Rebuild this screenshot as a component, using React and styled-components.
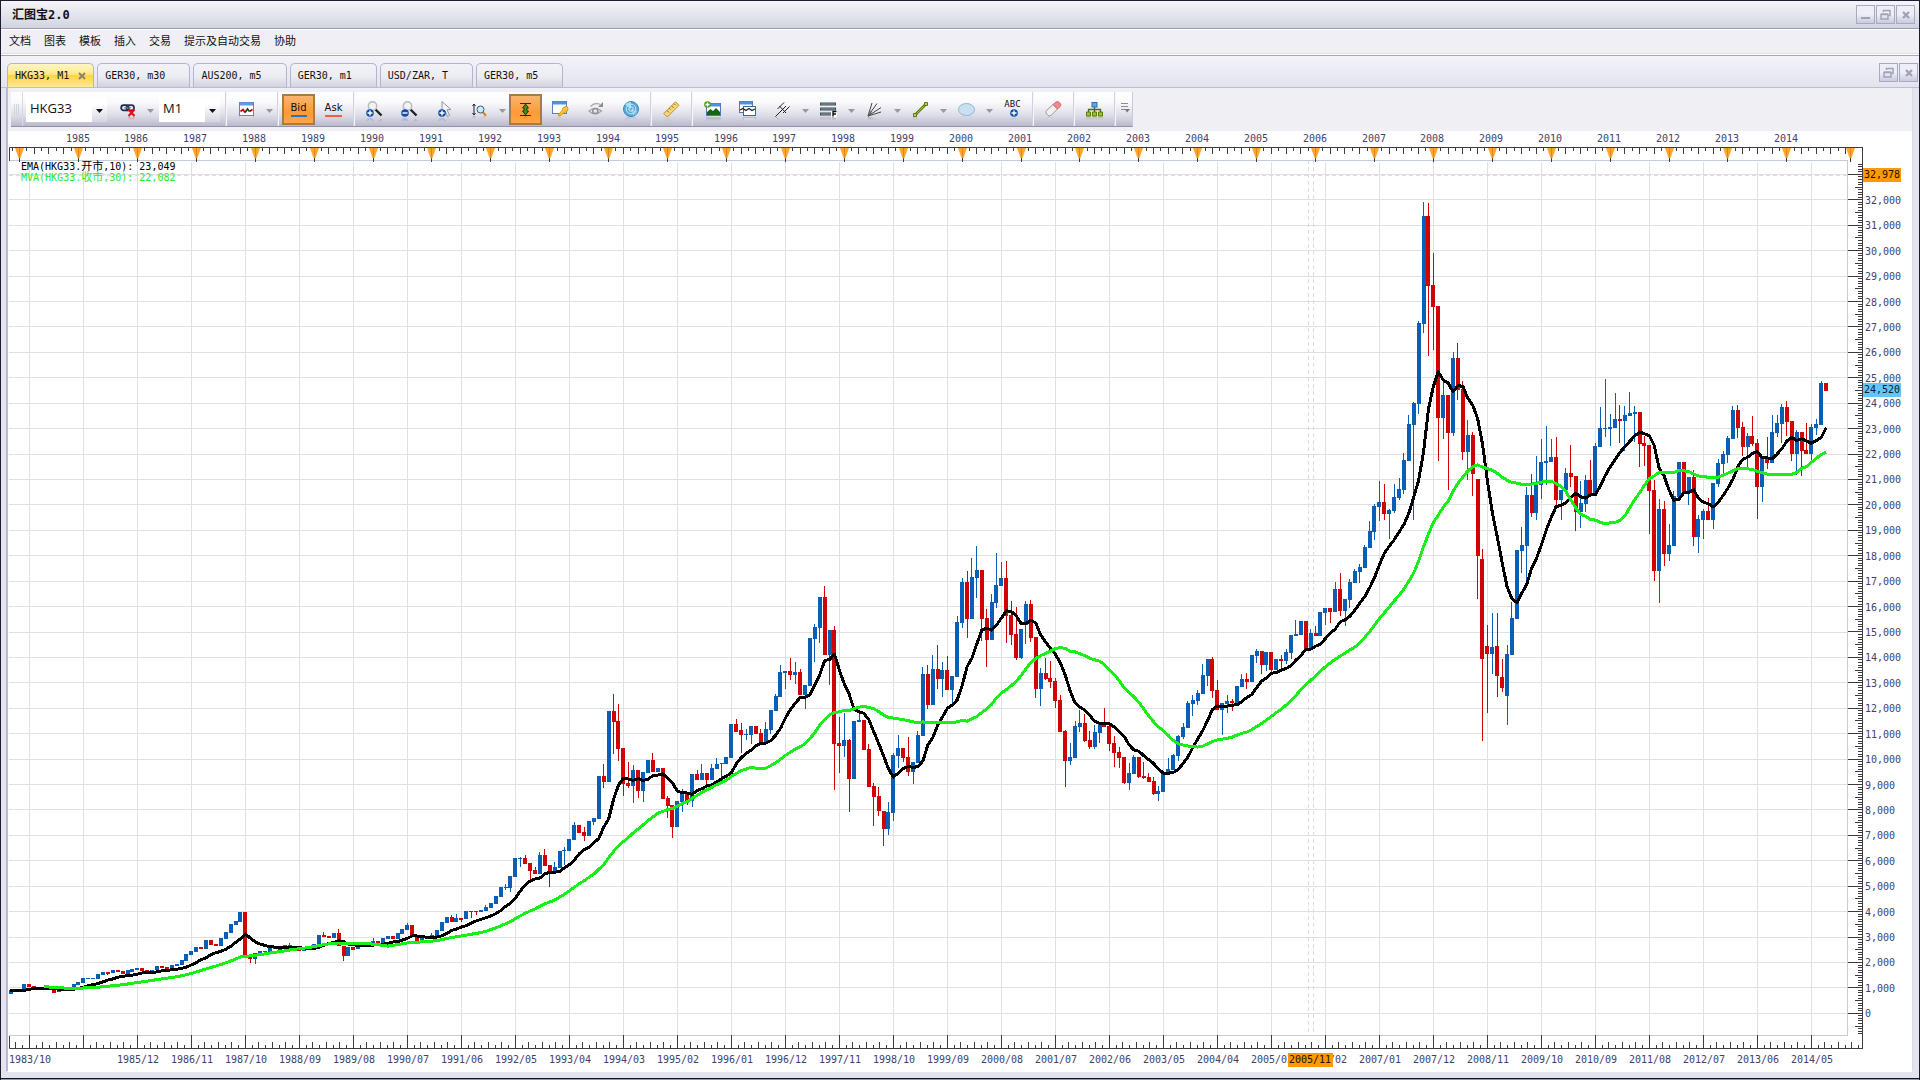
import React from "react";
import styled, { createGlobalStyle, css } from "styled-components";

const MONO = `"DejaVu Sans Mono", "Noto Sans CJK SC", monospace`;
const SANS = `"Open Sans", "Noto Sans CJK SC", sans-serif`;

const GlobalStyle = createGlobalStyle`
  *, *::before, *::after { box-sizing: border-box; }
  body { margin: 0; background: #e4e4ef; }
  button, select { font: inherit; color: inherit; }
`;

const Window = styled.div`
  display: flex;
  flex-direction: column;
  min-height: 100vh;
  border: 1px solid #1e1c2e;
  border-bottom: 0;
  background: #e4e4ef;
  font-family: ${MONO};
  font-size: 10px;
  color: #111;
`;

const TitleBar = styled.header`
  display: flex;
  align-items: center;
  justify-content: space-between;
  height: 28px;
  padding: 0 4px 0 11px;
  background: linear-gradient(#f5f5f9, #e4e5ed 50%, #d0d3e0);
  border-bottom: 1px solid #9c9cb2;
`;

const Title = styled.h1`
  margin: 0;
  font-size: 12px;
  line-height: 16px;
  font-weight: bold;
`;

const WindowButtons = styled.div`
  display: flex;
  gap: 1px;
`;

const WindowButton = styled.button`
  display: grid;
  place-items: center;
  width: 19px;
  height: 19px;
  padding: 0;
  border: 1px solid #a9a9c2;
  background: linear-gradient(#eeeef6 50%, #c9cade);
  color: #a0a2ba;
`;

const MenuBar = styled.nav`
  display: flex;
  align-items: center;
  gap: 13px;
  height: 27px;
  padding: 0 9px 2px 8px;
  border-top: 1px solid #fff;
  border-bottom: 1px solid #a4a4c2;
  background: linear-gradient(#f0eff5 23px, #dfdfe8 23px, #dfdfe8 24px, #fff 24px);
`;

const MenuItem = styled.button`
  padding: 0;
  border: 0;
  background: none;
  font-size: 11px;
  line-height: 16px;
`;

const TabBar = styled.div`
  display: flex;
  justify-content: space-between;
  align-items: flex-start;
  height: 32px;
  padding: 7px 1px 0 6px;
  background: linear-gradient(#f3f3f9, #e3e3ef);
  border-bottom: 1px solid #bcbcd4;
`;

const TabList = styled.div`
  display: flex;
  gap: 3px;
  height: 24px;
`;

const Tab = styled.button`
  display: flex;
  align-items: center;
  gap: 9px;
  height: 24px;
  padding: 0 24px 0 7px;
  border: 1px solid #b4b4cf;
  border-bottom: 0;
  border-radius: 5px 5px 0 0;
  background: linear-gradient(#f2f2f7, #ececf3 55%, #d2d2e0);
  white-space: nowrap;
  ${(p) =>
    p.$active &&
    css`
      padding-right: 7px;
      background: linear-gradient(#fff6c8, #ffe88a 45%, #ffd541 50%, #ffe993);
    `}
`;

const Workspace = styled.main`
  margin: 0 6px 0 5px;
  border-left: 2px solid #b9b9d6;
  border-right: 1px solid #dadae8;
  border-bottom: 1px solid #fff;
  background: #fff;
`;

const ToolbarRow = styled.div`
  display: flex;
  height: 43px;
  padding: 4px 0 4px 3px;
  background: #f0eff4;
`;

const Toolbar = styled.div`
  display: flex;
  align-items: center;
  height: 35px;
  border-bottom: 1px solid #9292ae;
  border-right: 1px solid #c8c8d8;
  background: linear-gradient(#ffffff, #fafafc 30%, #dcdce7 70%, #b9b9cd);
`;

const Grip = styled.span`
  width: 12px;
  height: 34px;
  background:
    repeating-linear-gradient(90deg, #d4d4de 0 1px, transparent 1px 2px) 3px 12px / 6px 11px no-repeat;
  border-right: 1px solid #d9d9e6;
`;

const Separator = styled.span`
  width: 6px;
  height: 34px;
  background: linear-gradient(90deg, transparent 2px, #d0d0de 2px, #d0d0de 3px, #f6f6fa 3px, #f6f6fa 4px, transparent 4px);
`;

const ToolButton = styled.button`
  display: grid;
  place-items: center;
  width: 33px;
  height: 31px;
  margin: 0 1px;
  padding: 0;
  border: 1px solid transparent;
  background: none;
  ${(p) =>
    p.$on &&
    css`
      border: 2px solid #a87b45;
      background: linear-gradient(#f8b56f, #ff9a38 60%, #ffa64a);
    `}
  svg {
    display: block;
    overflow: visible;
    -webkit-box-reflect: below -1px linear-gradient(transparent 70%, rgba(255, 255, 255, 0.35));
  }
`;

const DropButton = styled.button`
  width: 11px;
  height: 31px;
  padding: 0;
  border: 0;
  background: none;
  color: #9898a4;
`;

const OverflowButton = styled(DropButton)`
  width: 14px;
`;

const Quote = styled.span`
  padding-bottom: 2px;
  border-bottom: 2px solid ${(p) => p.$color};
  font: 10px/11px "DejaVu Sans", sans-serif;
`;

const Combo = styled.label`
  display: grid;
  grid-template-columns: 1fr 15px;
  width: ${(p) => p.$width}px;
  height: 25px;
  margin: 0 3px;
  background: #fff;
  font-family: ${SANS};
  font-size: 13px;
`;

const ComboSelect = styled.select`
  grid-area: 1 / 1 / 2 / 3;
  appearance: none;
  width: 100%;
  padding: 0 18px 3px 4px;
  border: 0;
  background: none;
`;

const ComboArrow = styled.span`
  grid-area: 1 / 2;
  display: grid;
  place-items: center;
  padding-top: 4px;
  background: linear-gradient(#fff 30%, #d5d5e2);
  pointer-events: none;
`;

const ChartSvg = styled.svg`
  display: block;
  width: 100%;
  height: auto;
  background: #fff;
  font-family: ${MONO};
  font-size: 10px;
`;

const Footer = styled.footer`
  height: 8px;
  margin-top: auto;
  border-bottom: 1px solid #8c9bab;
  background: linear-gradient(#e4e4ef 6px, #14141f 6px);
`;

/* ------------------------------------------------------------ chart data */

// Each block stores its monthly bars on a fine grid: y = base + value / scale.
// A bar reads "colour + body top, body bottom, [wick top, [wick bottom]]";
// "b" closes up, "r" closes down.
const BLOCKS = [
  {
    base: 880, scale: 3,
    bars: `b331 342,r331 335,b330 335,b312 330,r312 320,r318 324,b320 325,r320 326,r325 330,r330 338,b331 337,b328 332,
    b322 328,b312 324,b306 315,b294 308,b294 296,b294 297,b282 296,b276 284,r276 282 276 286,b271 280,r271 275,r274 283,b271 282,
    b267 275,b264 270,r264 272,r269 273,b270 275,b258 270,r258 263,r262 270,b255 266,b252 258,b240 255,b222 243,b213 225,
    b202 216,r201 207,b180 207,r180 195,r192 198,b174 198,b156 178,b132 159,b123 136,b96 126,r96 234,r232 237 232 249,
    b220 237 220 252,b213 220,b212 216,b204 216,b205 207,r205 210,b195 208,b195 205 189,r198 212,r205 214,b203 214,b198 206,
    b193 204,b165 192,r165 171 156,r168 173,b159 173,r159 198 147,r198 228 198 243,b201 228,r201 210,b195 208,b190 198,
    r190 196,b183 195 174,r184 190,b174 190,b168 177,r168 177,b159 177,b147 162,b135 150 129,r135 171,r170 183,b174 182,
    b168 176,b165 172 158,b150 168,b126 153,b111 129,r111 126 105,b114 126 102`,
  },
  {
    base: 740, scale: 3,
    bars: `r535 540 535 545,b514 538,r514 516 514 533,r514 517 514 524,b511 517,b501 512 496,b489 503,b469 491,b441 470,b441 443 432 450,
    b408 443 408 455,b354 410,b354 356 350 380,r354 371 345,r369 393 369 416,r390 402 381,b345 402 336,r345 378 327,
    r375 397 375 440,b381 395 366,b333 383,b331 334 321 375,b297 333,b255 300 246,r255 279,r276 288 262 302,b243 288,b234 246 234 255`,
  },
  {
    base: 560, scale: 3,
    bars: `b648 776,r648 665 612 683,b453 665,r453 486 402 582,r483 566 432 603,r564 671 564 708,r669 678 606 683,b630 678 616 728,
    r630 692 630 713,b636 692 636 725,b600 638,r600 636 579,b624 636,r624 717,r714 738 708 773,r735 800 735 833,b723 800,
    b700 725 687 755,r700 722 700 735,b642 722 642 740,r642 660 630,b639 660 612,r639 660 639 672,b624 660 612,b612 627 594,
    b609 612 609 650,b591 612,b492 593,r492 515 477,r510 525 489 578,b522 524 506 540,b498 524 498 553,r498 522,r519 546 506,
    b507 546 486,b450 510 450 522,b408 452 402,b336 410 315,b333 338 333 387,r333 345 294 359,b336 345 306 371,r336 405 327,
    b375 405 375 446,b234 378,b201 237 192 306,b111 204 111 248,r111 285 78,b210 285 210 375,r210 551 198 690,r549 558 471 638,
    b540 558 459 590,r540 656 536 755,b483 656,b480 486 459,r480 570,r567 681 552,r678 711 669 797,r708 753 680 767,
    r753 806 753 857,b756 806 726 825,b585 758 579 782,b564 588 525 623,r564 594 564 605,r591 635 531 647,b606 635 606 671,
    b525 608 512,b342 527 321,r342 434 315 446,b327 434 285,r327 357 255 387,b330 357 306 410,r330 390 288,b348 390 348 432,b186 350 168`,
  },
  {
    base: 520, scale: 3,
    bars: `b186 308 174 323,r186 297 153 354,b171 297 114,b150 173 78 234,r150 297 150 362,r294 359 267 440,b246 359 222,b195 249 99 263,
    b174 197 126,r174 288 123 368,r285 345 243 374,r342 413 261 419,b327 413 327 417,b252 315 243 372,r252 353 240 365,
    r351 507 351 533,b459 507 444 557,r459 476 414 479,r474 486 423 503,r483 543 474 563,r540 636 525,r633 722 630 800,
    b711 722 669 734,b618 713 603,b609 620 570 635,r609 662 582 665,r660 681 633 687,b636 681 615 686,b606 638 606 669,
    r606 620 564,r618 671 618 692,r669 698 648 740,r696 713 681 743,r711 788 711 792,b759 788 729 810,b711 761 705,
    r711 770 711 773,r768 773 726 777,r771 785 760,r783 822 771 825,b813 822 798 842,b759 815,b747 760 714,b705 749 702,
    b648 707 645 722,b621 651 609 656,b549 623 543,b540 551 525 587,b519 542 510 554,b465 521 432,b417 467 417 498,
    r417 513 411 533,r510 570 480,b549 570 549 645,b543 551 525 578,r543 550 537 572,b498 550,b477 500 462,r477 486 459 507,
    b405 486,b393 407 387 429,r393 434 393 461,b396 434 396 453,r396 449 396 455,b417 449,r417 423 405 449,b396 423 387 431,
    b345 398 345 417,b342 347 300,b303 345,r303 386,b339 386 327,r339 347 318,b276 347,b264 278 264 315,r264 276 264 309,
    b207 276 186,r207 272 159 287,b237 272 237 317,b186 240 177 263,b153 188 147,b141 155 132 188,b81 143 75,b33 83 3`,
  },
  {
    base: 190, scale: 2.8,
    bars: `b885 958 879 980,b874 888 815 927,r874 906 823 923,b896 907 893 977,b860 899 823 903,b837 862 806 868,b756 840 736 851,b655 759 630,
    b596 657 594 924,b372 599 367 626,b73 375 34 400,r73 269 36 465,r266 328 176 448,r325 638 325 759,b574 638 535 697,
    r574 680 574 840,b470 680 454 689,r470 560 428 588,r557 734 535 756,b686 734 644 812,r686 795 678 857,r809 1025 809 1145,
    r1033 1313 1005 1543,r1277 1299 1218 1464,b1280 1299 1184 1355,r1277 1361 1184 1420,r1364 1394 1313 1406,
    b1299 1417 1274 1498,b1198 1302 1154,b1008 1201,b994 1011 944 1072,b854 997 832 1100,r854 904 795 916,b823 904 745 924,
    b762 826 697 865,b759 763 661 826,b748 762 697,r748 868 692 890,b840 868 840 924,b792 840 778,r792 803 714 832,
    r801 902 801 955,b876 902 815 946,b812 879 798 902,r812 851 756,b717 851 708,b666 720 608,b666 668 529 692,
    b664 668 627 717,b641 666 568,r641 647 602 708,b630 647 605 731,b624 633 566,b622 626 605 706`,
  },
  {
    base: 340, scale: 3,
    bars: `r216 312 216 381,r309 318 288 377,r315 453 315 582,r450 693 420 722,b507 693 477 789,r507 641 483 678,b615 641 552 662,
    b468 618 453,b366 470,r366 455,b411 455 411 494,r411 591 390 618,b537 591 525 638,b513 540 507 597,r513 540 474,
    b429 540 429 567,b369 432 357 441,b342 372 333 405,b294 345 288 368,b210 297 198,r210 264 195 294,r261 321 246 347,
    b288 321 279 389,r288 312 228 318,r309 441 297 537,b354 441 354 486,r354 369 291 387,b276 369 225,b249 279 225 290,
    b201 252 192 309,r201 246 183 288,r243 342 243 362,b276 342 270 405,r276 332 276 407,r330 342 249,b261 342 252 363,
    b252 264 237 285,b129 255 123,r129 153`,
  },
];

const ORIGIN_X = 29.4;
const GRID_STEP = 54;
const MONTH = GRID_STEP / 11;
const FIRST_BAR = -4;
const ZERO_Y = 1013.3;
const PER_THOUSAND = 25.42;
const LEFT = 9;
const RIGHT = 1847;
const AXIS_RIGHT = 1862;

const candles = BLOCKS.flatMap(({ base, scale, bars }) =>
  bars.split(",").map((raw) => {
    const text = raw.trim();
    const [top, bottom, high, low] = text.slice(1).split(" ").map((v) => base + Number(v) / scale);
    return { up: text[0] === "b", top, bottom, high: high ?? top, low: low ?? bottom };
  })
).map((c, n) => ({ ...c, x: ORIGIN_X + (n + FIRST_BAR) * MONTH }));

// Exponential average of the opening prices, ten months.
function emaPoints() {
  let level = 989.3;
  return candles
    .map((c) => {
      const open = c.up ? c.bottom : c.top;
      level += (open - level) * (2 / 11);
      return `${c.x.toFixed(1)},${level.toFixed(1)}`;
    })
    .join(" ");
}

// Simple average of the closing prices, thirty months.
function mvaPoints() {
  const earlier = Array.from({ length: 22 }, (_, n) => 979 + (n * 14) / 21);
  const closes = [...earlier, ...candles.map((c) => (c.up ? c.top : c.bottom))];
  return candles
    .slice(7)
    .map((c, n) => {
      const span = closes.slice(n, n + 30);
      return `${c.x.toFixed(1)},${(span.reduce((a, b) => a + b, 0) / 30).toFixed(1)}`;
    })
    .join(" ");
}

function monthLabel(k) {
  if (k === 0) return "1983/10";
  const months = 1985 * 12 + 11 + (k - 2) * 11;
  return `${Math.floor(months / 12)}/${String((months % 12) + 1).padStart(2, "0")}`;
}

const range = (n, from = 0) => Array.from({ length: n }, (_, k) => k + from);
const INK = "#42426c";
const AXIS = "#3c3c40";

function Grid() {
  return (
    <g fill="#e0e0e2" shapeRendering="crispEdges">
      {range(34).map((k) => (
        <rect key={k} x={29 + k * GRID_STEP} y="162" width="1" height="873" />
      ))}
      {range(34).map((k) => (
        <rect key={k} x={LEFT} y={Math.round(ZERO_Y - k * PER_THOUSAND - 0.5)} width={RIGHT - LEFT} height="1" />
      ))}
      <path d="M1308.5 160V1036M1313.5 160V1036M9 175.5H1847" stroke="#dcdce0" strokeDasharray="4 3" fill="none" />
      <path d="M9 160.5H1847.5V1035.5H9" stroke="#c6ccd3" fill="none" />
    </g>
  );
}

function TopAxis() {
  const years = range(30).map((k) => ({ year: 1985 + k, x: 78.5 + k * 12 * MONTH }));
  const marks = [19.5, ...years.map((y) => y.x), 1850.5];
  const ticks = range(252).map((k) => ({ x: 19.5 + (k - 1) * MONTH * 1.5, long: (k - 1) % 2 === 0 }));
  return (
    <g>
      <path d="M9.5 161V147.5H1862.5" stroke={AXIS} fill="none" />
      <g fill={AXIS} shapeRendering="crispEdges">
        {ticks
          .filter((t) => t.x < 1846)
          .map((t, n) => (
            <rect key={n} x={Math.floor(t.x)} y="148" width="1" height={t.long ? 6 : 3} />
          ))}
      </g>
      {marks.map((x) => {
        const c = Math.floor(x) + 0.5;
        return (
          <g key={x}>
            <path d={`M${c} 157V162`} stroke={AXIS} />
            <path d={`M${c - 4.5} 148H${c + 4.5}L${c + 1} 158H${c - 1}Z`} fill="#ffa62f" />
            <path d={`M${c} 148V157`} stroke="#d98a1c" />
          </g>
        );
      })}
      {years.map(({ year, x }) => (
        <text key={year} x={Math.round(x) - 1} y="142" textAnchor="middle" fill={INK}>
          {year}
        </text>
      ))}
    </g>
  );
}

function BottomAxis() {
  return (
    <g>
      <path d="M9.5 1036V1048.5H1862.5" stroke={AXIS} fill="none" />
      <g fill={AXIS} shapeRendering="crispEdges">
        {range(275, -2)
          .map((k) => ({ k, x: Math.floor(ORIGIN_X + (k * GRID_STEP) / 8) }))
          .filter((t) => t.x < 1861)
          .map(({ k, x }) => {
            const h = k % 8 === 0 && k < 265 ? 13 : k % 2 === 0 ? 6 : 3;
            return <rect key={k} x={x} y={1048 - h} width="1" height={h} />;
          })}
      </g>
      {range(34)
        .filter((k) => k !== 1)
        .map((k) => (
          <text key={k} x={30 + k * GRID_STEP} y="1063" textAnchor="middle" fill={INK}>
            {monthLabel(k)}
          </text>
        ))}
      <rect x="1288" y="1053" width="45" height="14" fill="#ff9900" />
      <text x="1310" y="1063" textAnchor="middle" fill="#201000">
        2005/11
      </text>
    </g>
  );
}

function PriceAxis() {
  const ticks = range(343, -8).map((k) => ({ k, y: Math.round(ZERO_Y - (k * PER_THOUSAND) / 10 - 0.5) }));
  return (
    <g>
      <path d="M1862.5 147V1049" stroke={AXIS} />
      <g fill={AXIS} shapeRendering="crispEdges">
        {ticks
          .filter((t) => t.y > 161)
          .map(({ k, y }) => {
            const w = k % 10 === 0 ? 14 : k % 5 === 0 ? 7 : 4;
            return <rect key={k} x={AXIS_RIGHT - w} y={y} width={w} height="1" />;
          })}
      </g>
      {range(33).map((k) => (
        <text key={k} x="1865" y={Math.round(ZERO_Y - k * PER_THOUSAND) + 4} fill={INK}>
          {k === 0 ? "0" : `${k},000`}
        </text>
      ))}
      <rect x="1863" y="168" width="38" height="14" fill="#ff9900" />
      <text x="1864" y="178" fill="#201000">
        32,978
      </text>
      <rect x="1863" y="383" width="38" height="14" fill="#63c6f8" />
      <text x="1864" y="393" fill="#101830">
        24,520
      </text>
    </g>
  );
}

function Candles() {
  return (
    <g shapeRendering="crispEdges">
      {candles.map((c, n) => {
        const left = Math.max(Math.round(c.x - 2), LEFT);
        const top = Math.round(c.top);
        const high = Math.round(c.high);
        return (
          <g key={n} fill={c.up ? "#0a5eb6" : "#d00404"}>
            <rect x={Math.round(c.x - 0.5)} y={high} width="1" height={Math.round(c.low) - high} />
            <rect x={left} y={top} width="4" height={Math.max(1, Math.round(c.bottom) - top)} />
          </g>
        );
      })}
    </g>
  );
}

function Chart() {
  return (
    <ChartSvg viewBox="8 131 1904 940" role="img" aria-label="HKG33, M1">
      <Grid />
      <Candles />
      <g fill="none" strokeWidth="3" strokeLinejoin="round" shapeRendering="crispEdges">
        <polyline points={emaPoints()} stroke="#000" />
        <polyline points={mvaPoints()} stroke="#18ee18" />
      </g>
      <text x="21" y="170" fill="#000">
        EMA(HKG33.<tspan fontSize="11">开市</tspan>,10): 23,049
      </text>
      <text x="21" y="181" fill="#2ee62e">
        MVA(HKG33.<tspan fontSize="11">收市</tspan>,30): 22,082
      </text>
      <TopAxis />
      <BottomAxis />
      <PriceAxis />
    </ChartSvg>
  );
}

/* ----------------------------------------------------------------- icons */

const Icon = ({ children, w = 16, h = 16 }) => (
  <svg width={w} height={h} viewBox={`0 0 ${w} ${h}`} fill="none" aria-hidden="true">
    {children}
  </svg>
);

const Badge = ({ minus, x = 4, y = 12 }) => (
  <g>
    <circle cx={x} cy={y} r="3.8" fill="#0b4fae" />
    <path d={`M${x - 2.5} ${y}h5${minus ? "" : `M${x} ${y - 2.5}v5`}`} stroke="#fff" strokeWidth="1.4" />
  </g>
);

const Magnifier = ({ minus }) => (
  <Icon w={17} h={17}>
    <path d="M9.5 8.5L15.5 14.5" stroke="#222" strokeWidth="2.4" />
    <circle cx="6.5" cy="5" r="4.2" fill="#f0f2f4" stroke="#b8babe" strokeWidth="1.4" />
    <Badge minus={minus} />
  </Icon>
);

const icons = {
  link: (
    <Icon w={16} h={15}>
      <rect x="1.2" y="3.2" width="7.5" height="5.2" rx="2.5" stroke="#1c2b45" strokeWidth="1.8" />
      <rect x="6.5" y="3.2" width="7.5" height="5.2" rx="2.5" stroke="#24385c" strokeWidth="1.8" />
      <path d="M4 5.8H11" stroke="#5c7498" />
      <path d="M8.5 7.5L14.5 14M14.5 7.5L8.5 14" stroke="#e01010" strokeWidth="2" />
    </Icon>
  ),
  chart: (
    <Icon w={15} h={14}>
      <rect x=".5" y=".5" width="14" height="13" fill="#fff" stroke="#5c86c4" />
      <path d="M1 2H14" stroke="#5b9be8" strokeWidth="3" />
      <path d="M1.5 9.5L4 7.5L6 10.5" stroke="#c00" strokeWidth="1.7" />
      <path d="M6 10.5L8.5 7L10.5 9.5" stroke="#141" strokeWidth="1.7" />
      <path d="M10.5 9.5L13.5 7.5" stroke="#c00" strokeWidth="1.7" />
    </Icon>
  ),
  zoomIn: <Magnifier />,
  zoomOut: <Magnifier minus />,
  cursor: (
    <Icon w={14} h={17}>
      <path d="M4 .5V12L7 9.5L9.5 15.5L11.5 14.5L9 8.7H13Z" fill="#f4f4f6" stroke="#94949c" />
      <Badge />
    </Icon>
  ),
  axisZoom: (
    <Icon w={15} h={14}>
      <path d="M2 2V13M.5 4L2 2L3.500 4M.5 11L2 13L3.500 11" stroke="#222" />
      <path d="M10.500 10L14 13.500" stroke="#c8860e" strokeWidth="2" />
      <circle cx="8.500" cy="7.500" r="3.500" fill="#c9ecf8" stroke="#3a5f78" />
    </Icon>
  ),
  fit: (
    <Icon w={11} h={13}>
      <path d="M0 .5H11M0 12.500H11" stroke="#3b2a10" />
      <path d="M5.500 1L8.500 5H7V8H8.500L5.500 12L2.500 8H4V5H2.500Z" fill="#3f8f14" stroke="#1c3c08" />
    </Icon>
  ),
  options: (
    <Icon w={17} h={16}>
      <rect x=".5" y=".5" width="14" height="12" fill="#fff" stroke="#5c80bc" />
      <path d="M1 2H14" stroke="#4f92e4" strokeWidth="3" />
      <path d="M6 14.5L10 9.5L11 7L14.5 5L16 7.5L15 10.5L12 11.5L8 15Z" fill="#fcc43c" stroke="#d8940c" />
    </Icon>
  ),
  eye: (
    <Icon w={16} h={16}>
      <path d="M1 10Q7 4.5 13.5 10Q7 15.5 1 10Z" stroke="#a2a2a4" strokeWidth="1.2" />
      <circle cx="7.3" cy="10" r="2.6" stroke="#909092" strokeWidth="1.5" />
      <path d="M2.5 5.5Q7 .8 12 3.5" stroke="#b0b0b2" strokeWidth="1.4" />
      <path d="M15 1V6H10Z" fill="#8c8c8e" />
    </Icon>
  ),
  radar: (
    <Icon w={16} h={16}>
      <circle cx="8" cy="8" r="7.5" fill="#5ba8d8" stroke="#3b86bd" />
      <path d="M8 8L2 3.5A7 7 0 0 1 8 1Z" fill="#a5dcf4" />
      <path d="M8 8L14.5 10A7 7 0 0 1 10 14.7Z" fill="#8acbea" />
      <circle cx="8" cy="8" r="4.8" stroke="#bfe6f6" />
      <circle cx="8" cy="8" r="2.2" stroke="#d5f0fb" />
    </Icon>
  ),
  ruler: (
    <Icon w={17} h={17}>
      <path d="M.8 12.5L12.5 .8L16 4.3L4.3 16Z" fill="#f7d77d" stroke="#b98f2c" />
      <path d="M4 9.5L6 11.5M6.3 7.2L7.8 8.7M8.6 4.9L10.6 6.9M11 2.6L12.5 4.1" stroke="#8a6514" />
    </Icon>
  ),
  picture: (
    <Icon w={17} h={16}>
      <rect x="2.5" y="2.5" width="14" height="12" fill="#fff" stroke="#5078b4" />
      <path d="M3 4H16" stroke="#4f90e0" strokeWidth="3" />
      <path d="M3 14V11L6.5 8L9 10L12 7L16 11V14Z" fill="#146414" />
      <circle cx="3.5" cy="3.5" r="3.3" fill="#49a018" />
      <path d="M1.5 3.5H5.5M3.5 1.5V5.5" stroke="#fff" strokeWidth="1.3" />
    </Icon>
  ),
  windows: (
    <Icon w={17} h={16}>
      <rect x=".5" y=".5" width="13" height="11" fill="#fff" stroke="#5078b4" />
      <path d="M1 2H13" stroke="#4f90e0" strokeWidth="3" />
      <rect x="4.5" y="5.5" width="12" height="9" fill="#fff" stroke="#3c64a0" />
      <path d="M1 9L4 7.5L7 9.5L10 7.5L13 9.5L16 8" stroke="#222" strokeWidth="1.3" />
    </Icon>
  ),
  pitchfork: (
    <Icon w={15} h={15}>
      <path d="M.5 14.5L11 4M4.5 4L11 11M2.5 7L9 .5M8 11L14.5 4.5" stroke="#222" />
    </Icon>
  ),
  levels: (
    <Icon w={17} h={15}>
      <path d="M0 2H16M0 7H16M0 12H16" stroke="#3c4c58" strokeWidth="3" />
      <path d="M1 2H15M1 7H15M1 12H11" stroke="#8fa0aa" />
      <rect x="11" y="9" width="6" height="6" fill="#fff" />
      <path d="M13 14.5V9.5H16.5M13 12H16" stroke="#111" strokeWidth="1.4" />
    </Icon>
  ),
  fan: (
    <Icon w={15} h={15}>
      <path d="M1 14L5 1M1 14L10 1.5M1 14L14 5.5M1 14L14 10" stroke="#444" />
      <path d="M1 14L3 9L5 11Z" fill="#666" />
    </Icon>
  ),
  line: (
    <Icon w={15} h={15}>
      <path d="M2 13L13 2" stroke="#5d7a08" strokeWidth="2.6" />
      <path d="M2 13L13 2" stroke="#a8c83c" />
      <path d="M.5 11.5h3v3h-3zM11.5 .5h3v3h-3z" fill="#b8d44c" stroke="#5d7a08" />
    </Icon>
  ),
  ellipse: (
    <Icon w={17} h={13}>
      <ellipse cx="8.5" cy="6.5" rx="8" ry="6" fill="#c9dff2" stroke="#93b4d2" />
    </Icon>
  ),
  eraser: (
    <Icon w={17} h={16}>
      <path d="M1 12Q.5 10.5 2 9L8 3.5L12.5 8L6.5 14Q4.5 15.5 3 14.5Z" fill="#f1eff0" stroke="#9c9698" />
      <path d="M8 3.5L11 1Q12.5 0 14 1.2L15.5 2.8Q16.5 4 15.2 5.5L12.5 8Z" fill="#f08c90" stroke="#cc6c72" />
    </Icon>
  ),
  tree: (
    <Icon w={17} h={15}>
      <path d="M8.5 5V10M2.5 10V7.5H14.5V10" stroke="#4c6a10" strokeWidth="1.3" />
      <rect x="6" y=".5" width="5" height="4.5" fill="#5aa6f0" stroke="#2c6cb8" />
      <path d="M.5 10h4v4h-4zM6.5 10h4v4h-4zM12.5 10h4v4h-4z" fill="#9cc034" stroke="#5a7c0c" />
    </Icon>
  ),
};

const TextLabelIcon = styled.span`
  display: grid;
  justify-items: center;
  font: 9px/9px "DejaVu Sans Mono", monospace;
`;

const Arrow = () => (
  <svg width="7" height="4" viewBox="0 0 7 4" aria-hidden="true">
    <path d="M0 0H7L3.5 4Z" fill="currentColor" />
  </svg>
);

const Tool = ({ name, menu, on }) => (
  <>
    <ToolButton type="button" aria-label={name} $on={on}>
      {icons[name]}
    </ToolButton>
    {menu && (
      <DropButton type="button" aria-label={`${name} menu`}>
        <Arrow />
      </DropButton>
    )}
  </>
);

const Picker = ({ label, value, width }) => (
  <Combo $width={width}>
    <ComboSelect aria-label={label} defaultValue={value}>
      <option>{value}</option>
    </ComboSelect>
    <ComboArrow>
      <Arrow />
    </ComboArrow>
  </Combo>
);

const RestoreGlyph = () => (
  <svg width="11" height="11" viewBox="0 0 11 11" fill="none" stroke="currentColor" aria-hidden="true">
    <path d="M3.5 3V1.5H10V6.5H8.5M3 1.5H10.5" strokeWidth="1.5" />
    <path d="M1 5.5H8V10H1ZM1 5H8" strokeWidth="1.5" />
  </svg>
);

const CloseGlyph = ({ strokeWidth = 2.4 }) => (
  <svg width="8" height="8" viewBox="0 0 8 8" stroke="currentColor" strokeWidth={strokeWidth} aria-hidden="true">
    <path d="M1 1L7 7M7 1L1 7" />
  </svg>
);

const MinimizeGlyph = () => (
  <svg width="9" height="9" viewBox="0 0 9 9" aria-hidden="true">
    <path d="M0 7H9V9H0Z" fill="currentColor" />
  </svg>
);

const TabClose = styled.span`
  display: flex;
  color: #8d8468;
`;

const MENUS = ["文档", "图表", "模板", "插入", "交易", "提示及自动交易", "协助"];
const TABS = ["HKG33, M1", "GER30, m30", "AUS200, m5", "GER30, m1", "USD/ZAR, T", "GER30, m5"];

export default function App() {
  return (
    <Window>
      <GlobalStyle />
      <TitleBar>
        <Title>汇图宝2.0</Title>
        <WindowButtons>
          <WindowButton type="button" aria-label="Minimize">
            <MinimizeGlyph />
          </WindowButton>
          <WindowButton type="button" aria-label="Restore">
            <RestoreGlyph />
          </WindowButton>
          <WindowButton type="button" aria-label="Close">
            <CloseGlyph />
          </WindowButton>
        </WindowButtons>
      </TitleBar>
      <MenuBar>
        {MENUS.map((m) => (
          <MenuItem key={m} type="button">
            {m}
          </MenuItem>
        ))}
      </MenuBar>
      <TabBar>
        <TabList role="tablist">
          {TABS.map((t, n) => (
            <Tab key={t} type="button" role="tab" aria-selected={n === 0} $active={n === 0}>
              {t}
              {n === 0 && (
                <TabClose>
                  <CloseGlyph strokeWidth={2} />
                </TabClose>
              )}
            </Tab>
          ))}
        </TabList>
        <WindowButtons>
          <WindowButton type="button" aria-label="Restore chart">
            <RestoreGlyph />
          </WindowButton>
          <WindowButton type="button" aria-label="Close chart">
            <CloseGlyph />
          </WindowButton>
        </WindowButtons>
      </TabBar>
      <Workspace>
        <ToolbarRow>
          <Toolbar role="toolbar">
            <Grip />
            <Picker label="Symbol" value="HKG33" width={81} />
            <Tool name="link" menu />
            <Picker label="Period" value="M1" width={61} />
            <Separator />
            <Tool name="chart" menu />
            <Separator />
            <ToolButton type="button" $on>
              <Quote $color="#1c78c8">Bid</Quote>
            </ToolButton>
            <ToolButton type="button">
              <Quote $color="#f06040">Ask</Quote>
            </ToolButton>
            <Separator />
            <Tool name="zoomIn" />
            <Tool name="zoomOut" />
            <Tool name="cursor" />
            <Tool name="axisZoom" menu />
            <Tool name="fit" on />
            <Tool name="options" />
            <Tool name="eye" />
            <Tool name="radar" />
            <Separator />
            <Tool name="ruler" />
            <Separator />
            <Tool name="picture" />
            <Tool name="windows" />
            <Tool name="pitchfork" menu />
            <Tool name="levels" menu />
            <Tool name="fan" menu />
            <Tool name="line" menu />
            <Tool name="ellipse" menu />
            <ToolButton type="button">
              <TextLabelIcon>
                ABC
                <Icon w={10} h={9}>
                  <Badge x={7} y={4} />
                </Icon>
              </TextLabelIcon>
            </ToolButton>
            <Separator />
            <Tool name="eraser" />
            <Separator />
            <Tool name="tree" />
            <Separator />
            <OverflowButton type="button" aria-label="More tools">
              <svg width="9" height="10" viewBox="0 0 9 10" aria-hidden="true">
                <path d="M0 .5H7M0 3.5H7M0 6.5H4" stroke="#8c8c98" />
                <path d="M3.5 6H9L6.2 9.5Z" fill="#77777f" />
              </svg>
            </OverflowButton>
          </Toolbar>
        </ToolbarRow>
        <Chart />
      </Workspace>
      <Footer />
    </Window>
  );
}
